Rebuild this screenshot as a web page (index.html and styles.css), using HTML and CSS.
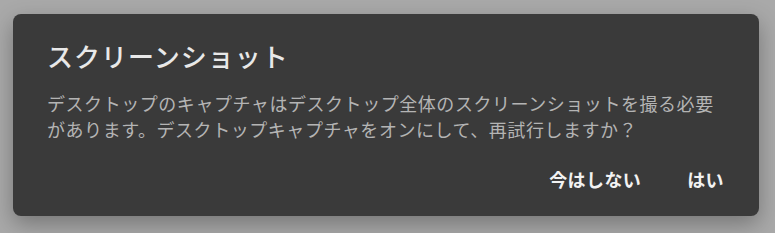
FILE: index.html
```html
<!DOCTYPE html>
<html lang="ja">
<head>
<meta charset="utf-8">
<link rel="stylesheet" href="styles.css">
</head>
<body>
<div class="dialog">
  <h1 class="title">スクリーンショット</h1>
  <p class="message">デスクトップのキャプチャはデスクトップ全体のスクリーンショットを撮る必要があります。デスクトップキャプチャをオンにして、再試行しますか？</p>
  <div class="actions">
    <button class="btn">今はしない</button>
    <button class="btn">はい</button>
  </div>
</div>
</body>
</html>
```
FILE: styles.css
```css
html, body {
  margin: 0;
  padding: 0;
}
body {
  width: 775px;
  height: 233px;
  background: #a9a9a9;
  font-family: "Noto Sans CJK JP", "Noto Sans", sans-serif;
  overflow: hidden;
}
.dialog {
  box-sizing: border-box;
  margin: 14px 0 0 13px;
  width: 746px;
  height: 202px;
  background: #3a3a3a;
  border-radius: 8px;
  box-shadow: 0 8px 22px rgba(0,0,0,0.3);
  padding: 27px 34px 0 34px;
}
.title {
  margin: 0;
  font-size: 26px;
  line-height: 30px;
  font-weight: 500;
  color: #e8e8e8;
  letter-spacing: 1px;
}
.message {
  margin: 19px 0 0 0;
  font-size: 18px;
  line-height: 26px;
  color: #b4b4b4;
  letter-spacing: 0.55px;
  width: 680px;
}
.actions {
  display: flex;
  justify-content: flex-end;
  gap: 46px;
  margin-top: 24px;
  padding-right: 1px;
}
.btn {
  background: none;
  border: none;
  padding: 0;
  font-family: inherit;
  font-size: 18px;
  font-weight: 700;
  color: #f2f2f2;
  letter-spacing: 0.4px;
  line-height: 26px;
}
```
